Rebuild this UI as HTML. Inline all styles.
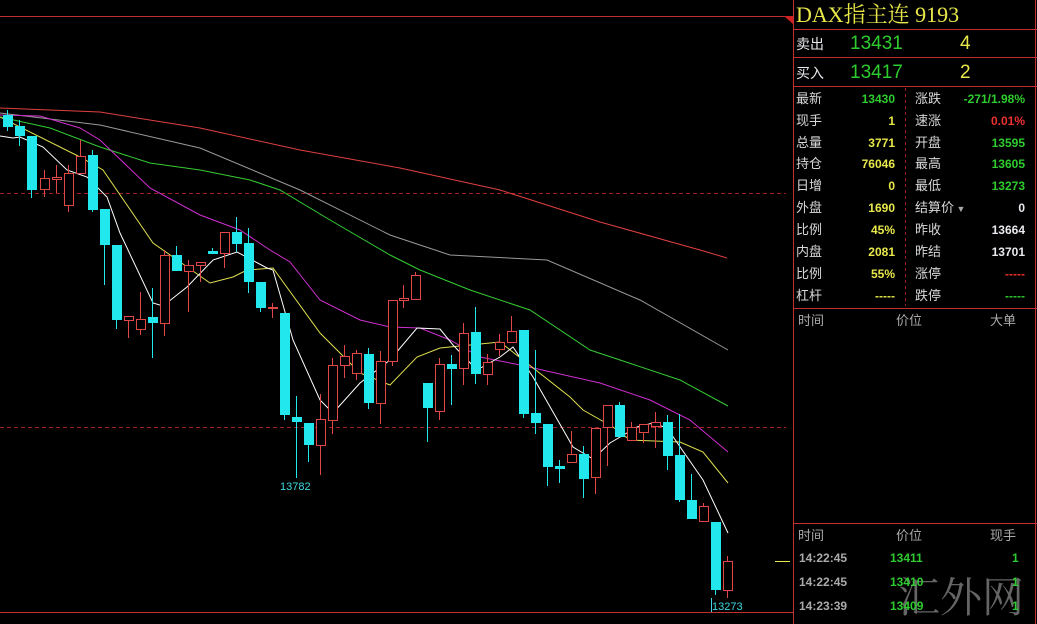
<!DOCTYPE html>
<html><head><meta charset="utf-8"><style>
body{margin:0;background:#000;width:1037px;height:624px;overflow:hidden;position:relative;font-family:"Liberation Sans","Noto Sans CJK SC",sans-serif}
.t{position:absolute;font-size:13px;line-height:16px;white-space:nowrap}
.l{color:#d8d8d8;left:796px}
.l2{color:#d8d8d8;left:915px}
.v{font-weight:bold;text-align:right;width:80px;left:815px;font-size:12px}
.v2{font-weight:bold;text-align:right;width:90px;left:935px;font-size:12px}
.g{color:#2ecc2e}.y{color:#e8e84a}.w{color:#e8e8ee}.r{color:#ee3030}.gr{color:#aaa}
</style></head><body>
<svg width="1037" height="624" style="position:absolute;left:0;top:0">
<line x1="0" y1="16.5" x2="786" y2="16.5" stroke="#c03030"/>
<line x1="0" y1="193.5" x2="786" y2="193.5" stroke="#a02020" stroke-dasharray="4,3"/>
<line x1="0" y1="427.5" x2="786" y2="427.5" stroke="#a02020" stroke-dasharray="4,3"/>
<line x1="0" y1="612.5" x2="793" y2="612.5" stroke="#c03030"/>
<polygon points="784,16 793,16 793,24" fill="#d02020"/>
<line x1="793.5" y1="0" x2="793.5" y2="624" stroke="#c03030"/>
<line x1="793" y1="29.5" x2="1037" y2="29.5" stroke="#c03030"/>
<line x1="793" y1="57.5" x2="1037" y2="57.5" stroke="#c03030"/>
<line x1="793" y1="86.5" x2="1037" y2="86.5" stroke="#c03030"/>
<line x1="793" y1="308.5" x2="1037" y2="308.5" stroke="#c03030"/>
<line x1="793" y1="523.5" x2="1037" y2="523.5" stroke="#c03030"/>
<line x1="905.5" y1="88" x2="905.5" y2="306" stroke="#a02020" stroke-dasharray="3,3"/>
<line x1="1035.5" y1="0" x2="1035.5" y2="624" stroke="#c03030"/>
<line x1="775" y1="561.5" x2="790" y2="561.5" stroke="#e8e84a"/>
<g fill="none" stroke-width="1">
<polyline stroke="#e04040" points="0,108 100,112 200,128 300,150 400,168 500,190 600,222 700,250 727,258"/>
<polyline stroke="#999" points="0,113 100,125 200,148 300,190 390,235 450,255 547,260 640,300 728,350"/>
<polyline stroke="#3c3" points="0,117 50,128 100,147 150,163 200,170 250,180 280,190 330,220 390,255 420,270 470,290 530,310 590,350 680,380 728,406"/>
<polyline stroke="#d030d0" points="0,115 40,116 80,128 100,140 150,188 200,215 240,230 270,250 290,262 320,300 360,320 390,327 420,328 450,340 480,357 520,365 600,383 650,400 690,420 728,452"/>
<polyline stroke="#e0e050" points="0,117 80,157 103,170 153,243 173,257 210,283 233,277 247,270 273,268 320,333 360,373 390,385 417,357 440,348 500,342 523,360 570,397 583,410 613,427 630,440 680,442 703,452 728,483"/>
<polyline stroke="#fff" points="0,136 13,138 20,137 43,147 67,170 87,177 107,197 120,233 153,303 163,306 187,287 213,260 237,252 267,268 273,270 293,340 320,400 333,413 360,383 390,360 417,328 440,329 453,345 477,370 500,357 513,347 533,377 573,447 593,459 610,443 637,427 653,423 667,428 703,480 728,533"/>
</g>
<g id="c"></g>
<text x="280" y="490" fill="#40d8e0" font-size="11" font-family="Liberation Sans">13782</text>
<line x1="711.5" y1="598" x2="711.5" y2="612" stroke="#40d8e0"/>
<text x="712" y="610" fill="#40d8e0" font-size="11" font-family="Liberation Sans">13273</text>
<text x="898" y="612" fill="#777" font-size="42" font-family="'Noto Serif CJK SC',serif" opacity="0.85">汇外网</text>
</svg>
<div class="t y" style="left:796px;top:2px;font-size:22px;line-height:26px;font-family:'Liberation Serif','Noto Serif CJK SC',serif">DAX指主连 9193</div>
<div class="t w" style="left:796px;top:36px;font-size:14px">卖出</div>
<div class="t g" style="left:850px;top:34px;font-size:19px;line-height:20px">13431</div>
<div class="t y" style="left:960px;top:34px;font-size:19px;line-height:20px">4</div>
<div class="t w" style="left:796px;top:65px;font-size:14px">买入</div>
<div class="t g" style="left:850px;top:63px;font-size:19px;line-height:20px">13417</div>
<div class="t y" style="left:960px;top:63px;font-size:19px;line-height:20px">2</div>

<div class="t l" style="top:91px">最新</div><div class="t v g" style="top:91px">13430</div>
<div class="t l2" style="top:91px">涨跌</div><div class="t v2 g" style="top:91px">-271/1.98%</div>
<div class="t l" style="top:113px">现手</div><div class="t v y" style="top:113px">1</div>
<div class="t l2" style="top:113px">速涨</div><div class="t v2 r" style="top:113px">0.01%</div>
<div class="t l" style="top:135px">总量</div><div class="t v y" style="top:135px">3771</div>
<div class="t l2" style="top:135px">开盘</div><div class="t v2 g" style="top:135px">13595</div>
<div class="t l" style="top:156px">持仓</div><div class="t v y" style="top:156px">76046</div>
<div class="t l2" style="top:156px">最高</div><div class="t v2 g" style="top:156px">13605</div>
<div class="t l" style="top:178px">日增</div><div class="t v y" style="top:178px">0</div>
<div class="t l2" style="top:178px">最低</div><div class="t v2 g" style="top:178px">13273</div>
<div class="t l" style="top:200px">外盘</div><div class="t v y" style="top:200px">1690</div>
<div class="t l2" style="top:200px">结算价<span style="font-size:9px;color:#aaa"> ▼</span></div><div class="t v2 w" style="top:200px">0</div>
<div class="t l" style="top:222px">比例</div><div class="t v y" style="top:222px">45%</div>
<div class="t l2" style="top:222px">昨收</div><div class="t v2 w" style="top:222px">13664</div>
<div class="t l" style="top:244px">内盘</div><div class="t v y" style="top:244px">2081</div>
<div class="t l2" style="top:244px">昨结</div><div class="t v2 w" style="top:244px">13701</div>
<div class="t l" style="top:266px">比例</div><div class="t v y" style="top:266px">55%</div>
<div class="t l2" style="top:266px">涨停</div><div class="t v2 r" style="top:266px">-----</div>
<div class="t l" style="top:288px">杠杆</div><div class="t v y" style="top:288px">-----</div>
<div class="t l2" style="top:288px">跌停</div><div class="t v2 g" style="top:288px">-----</div>

<div class="t gr" style="left:798px;top:313px">时间</div>
<div class="t gr" style="left:896px;top:313px">价位</div>
<div class="t gr" style="left:990px;top:313px">大单</div>
<div class="t gr" style="left:798px;top:528px">时间</div>
<div class="t gr" style="left:896px;top:528px">价位</div>
<div class="t gr" style="left:990px;top:528px">现手</div>
<div class="t gr" style="left:799px;top:550px;font-weight:bold;font-size:12px">14:22:45</div>
<div class="t g" style="left:890px;top:550px;font-weight:bold;font-size:12px">13411</div>
<div class="t g" style="left:1012px;top:550px;font-weight:bold;font-size:12px">1</div>
<div class="t gr" style="left:799px;top:574px;font-weight:bold;font-size:12px">14:22:45</div>
<div class="t g" style="left:890px;top:574px;font-weight:bold;font-size:12px">13410</div>
<div class="t g" style="left:1012px;top:574px;font-weight:bold;font-size:12px">1</div>
<div class="t gr" style="left:799px;top:598px;font-weight:bold;font-size:12px">14:23:39</div>
<div class="t g" style="left:890px;top:598px;font-weight:bold;font-size:12px">13409</div>
<div class="t g" style="left:1012px;top:598px;font-weight:bold;font-size:12px">1</div>
<script>
var C=[[3,115,127,110,131,0],[15,126,136,120,146,0],[27,136,190,136,198,0],[40,178,189,170,197,1],[52,177,179,165,193,1],[64,173,205,165,212,1],[76,156,173,140,173,1],[88,155,210,150,212,0],[100,209,245,209,285,0],[112,245,320,245,329,0],[124,316,320,316,338,1],[136,319,329,292,335,1],[148,317,323,288,358,0],[160,255,323,250,336,1],[172,255,271,246,271,0],[184,265,271,260,312,1],[196,262,265,262,282,1],[208,251,254,248,254,0],[220,232,253,232,268,1],[232,232,244,217,252,0],[244,243,282,228,293,0],[256,282,308,282,312,0],[268,307,308,303,318,1],[280,313,415,313,420,0],[292,417,422,396,478,0],[304,423,445,423,462,0],[316,419,445,394,475,1],[328,365,420,358,434,1],[340,356,365,345,378,1],[352,353,373,350,380,1],[364,354,403,348,409,0],[376,361,403,351,424,1],[388,300,361,300,366,1],[399,298,300,285,308,1],[411,275,299,272,299,1],[423,383,408,383,442,0],[435,364,411,358,420,1],[447,364,369,355,405,0],[459,333,368,323,385,1],[471,332,374,307,384,0],[483,362,374,354,385,1],[495,342,349,334,356,1],[507,331,342,316,342,1],[519,330,414,330,418,0],[531,413,423,350,434,0],[543,424,467,424,486,0],[555,466,469,460,483,0],[567,454,462,431,462,1],[579,454,479,446,498,0],[591,428,477,428,494,1],[603,405,427,405,466,1],[615,405,437,402,437,0],[627,427,440,422,441,1],[639,424,432,424,443,1],[651,422,426,412,448,1],[663,422,456,415,470,0],[675,455,500,414,502,0],[687,500,519,474,519,0],[699,506,521,503,521,1],[711,522,590,522,595,0],[723,561,590,556,598,1]];
var s='';C.forEach(function(c){var x=c[0],col=c[5]?'#e04848':'#22e8ee',m=x+4.5;
s+='<line x1="'+m+'" y1="'+c[3]+'" x2="'+m+'" y2="'+c[4]+'" stroke="'+col+'"/>';
if(c[5])s+='<rect x="'+(x+.5)+'" y="'+(c[1]+.5)+'" width="9" height="'+Math.max(c[2]-c[1],1)+'" fill="#000" stroke="'+col+'"/>';
else s+='<rect x="'+x+'" y="'+c[1]+'" width="10" height="'+Math.max(c[2]-c[1],2)+'" fill="'+col+'"/>';});
document.getElementById('c').innerHTML=s;
</script>
</body></html>
